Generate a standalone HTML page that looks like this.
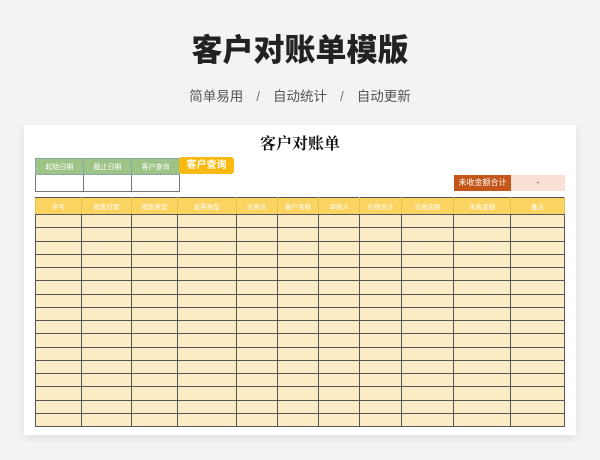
<!DOCTYPE html>
<html><head><meta charset="utf-8"><style>
*{margin:0;padding:0;box-sizing:border-box}
body{width:600px;height:460px;background:#f2f3f5;font-family:"Liberation Sans","Noto Sans CJK SC",sans-serif;position:relative;overflow:hidden}
.t{position:absolute;left:0;width:600px;text-align:center;top:25px;font-size:31px;font-weight:900;color:#222}
.s{position:absolute;left:0;width:600px;text-align:center;top:85px;font-size:13.5px;color:#555}
.s span{margin:0 13px;color:#777}
.card{position:absolute;left:24px;top:125px;width:552px;height:310px;background:#fff;box-shadow:0 3px 8px rgba(0,0,0,.08)}
.ct{position:absolute;left:0;top:131px;width:600px;text-align:center;font-family:"Liberation Serif","Noto Serif CJK SC",serif;font-size:16px;color:#111;font-weight:bold}
table{border-collapse:collapse;position:absolute}
.f{left:35px;top:158px}
.f td{border:1px solid #777;width:48px;font-size:7px;color:#fff;text-align:center}
.f tr:first-child td{background:#9dc386;height:16px;border-color:#8aa;}
.f tr:last-child td{height:17px;background:#fff}
.btn{position:absolute;left:179px;top:157px;width:55px;height:17px;background:#f9b90f;border-radius:3px;color:#fff;font-size:10px;font-weight:bold;text-align:center;line-height:17px}
.u1{position:absolute;left:454px;top:175px;width:57px;height:16px;background:#c5561a;color:#fff;font-size:8px;text-align:center;line-height:16px}
.u2{position:absolute;left:511px;top:175px;width:54px;height:16px;background:#fbe0d6;color:#333;font-size:8px;text-align:center;line-height:16px}
.m{left:35px;top:197px;width:530px;border:1.5px solid #555}
.m td{border:1px solid #555;height:13.25px;background:#fdedc6}
.m tr.h td{background:#fbd360;height:17px;font-size:6.5px;color:#fff;text-align:center;border-left-color:#e8c050;border-right-color:#e8c050;border-top-color:#555}
</style></head><body>
<div class="t">客户对账单模版</div>
<div class="s">简单易用<span>/</span>自动统计<span>/</span>自动更新</div>
<div class="card"></div>
<div class="ct">客户对账单</div>
<table class="f"><tr><td>起始日期</td><td>截止日期</td><td>客户查询</td></tr><tr><td></td><td></td><td></td></tr></table>
<div class="btn">客户查询</div>
<div class="u1">未收金额合计</div><div class="u2">-</div>
<table class="m">
<colgroup><col style="width:46px"><col style="width:50px"><col style="width:46px"><col style="width:59px"><col style="width:41px"><col style="width:42px"><col style="width:41px"><col style="width:42px"><col style="width:52px"><col style="width:57px"><col style="width:54px"></colgroup>
<tr class="h"><td>序号</td><td>销售日期</td><td>销售类型</td><td>发票类型</td><td>业务员</td><td>客户名称</td><td>审核人</td><td>价税合计</td><td>已收金额</td><td>未收金额</td><td>备注</td></tr>
<tr><td></td><td></td><td></td><td></td><td></td><td></td><td></td><td></td><td></td><td></td><td></td></tr>
<tr><td></td><td></td><td></td><td></td><td></td><td></td><td></td><td></td><td></td><td></td><td></td></tr>
<tr><td></td><td></td><td></td><td></td><td></td><td></td><td></td><td></td><td></td><td></td><td></td></tr>
<tr><td></td><td></td><td></td><td></td><td></td><td></td><td></td><td></td><td></td><td></td><td></td></tr>
<tr><td></td><td></td><td></td><td></td><td></td><td></td><td></td><td></td><td></td><td></td><td></td></tr>
<tr><td></td><td></td><td></td><td></td><td></td><td></td><td></td><td></td><td></td><td></td><td></td></tr>
<tr><td></td><td></td><td></td><td></td><td></td><td></td><td></td><td></td><td></td><td></td><td></td></tr>
<tr><td></td><td></td><td></td><td></td><td></td><td></td><td></td><td></td><td></td><td></td><td></td></tr>
<tr><td></td><td></td><td></td><td></td><td></td><td></td><td></td><td></td><td></td><td></td><td></td></tr>
<tr><td></td><td></td><td></td><td></td><td></td><td></td><td></td><td></td><td></td><td></td><td></td></tr>
<tr><td></td><td></td><td></td><td></td><td></td><td></td><td></td><td></td><td></td><td></td><td></td></tr>
<tr><td></td><td></td><td></td><td></td><td></td><td></td><td></td><td></td><td></td><td></td><td></td></tr>
<tr><td></td><td></td><td></td><td></td><td></td><td></td><td></td><td></td><td></td><td></td><td></td></tr>
<tr><td></td><td></td><td></td><td></td><td></td><td></td><td></td><td></td><td></td><td></td><td></td></tr>
<tr><td></td><td></td><td></td><td></td><td></td><td></td><td></td><td></td><td></td><td></td><td></td></tr>
<tr><td></td><td></td><td></td><td></td><td></td><td></td><td></td><td></td><td></td><td></td><td></td></tr>
</table>
</body></html>
